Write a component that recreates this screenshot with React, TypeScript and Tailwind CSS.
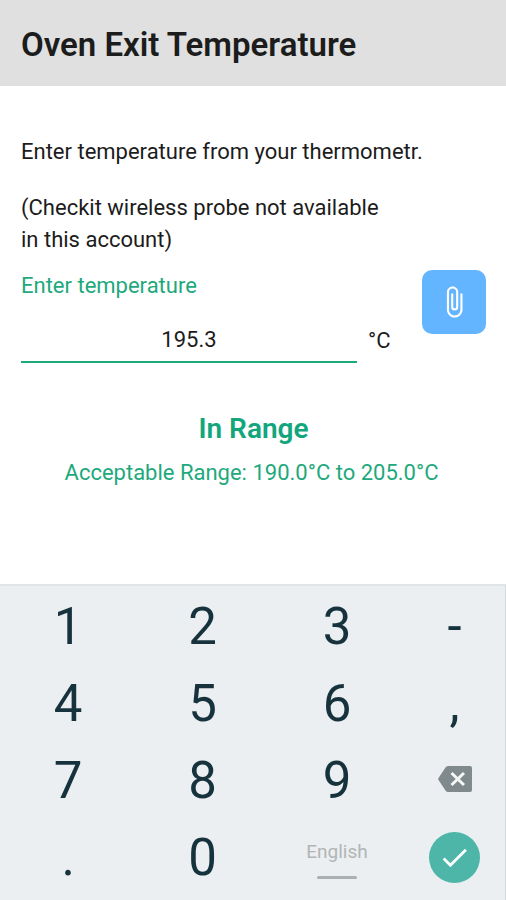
import { useState } from "react";
import { MdAttachFile, MdCheck } from "react-icons/md";

const MIN = 190;
const MAX = 205;

function BackspaceIcon() {
  return (
    <svg className="w-[34px] h-[26px] mb-1" viewBox="0 0 34 26" fill="none">
      <path d="M10 0H32Q34 0 34 2V24Q34 26 32 26H10Q8.500 26 7.500 24.500L0.500 14Q0 13 0.500 12L7.500 1.500Q8.500 0 10 0Z" fill="#80898c" />
      <path d="M13.500 7L26 19M26 7L13.500 19" stroke="#f6f8f8" strokeWidth="3" />
    </svg>
  );
}

export default function App() {
  const [value, setValue] = useState("195.3");
  const temp = parseFloat(value);
  const inRange = temp >= MIN && temp <= MAX;

  const keyClass = "flex items-center justify-center text-[51px] leading-none text-[#16323c]";

  const renderKey = (key: string) => (
    <button key={key} type="button" className={keyClass} onClick={() => setValue(value + key)}>
      {key}
    </button>
  );

  return (
    <div className="min-h-screen flex flex-col bg-white font-[Roboto,sans-serif]">
      <header className="bg-[#e0e0e0] px-[21px] pt-6 pb-5">
        <h1 className="text-[33px] leading-[42px] font-semibold text-[#1c1c1c]">Oven Exit Temperature</h1>
      </header>

      <main className="flex-1 pl-[21px] pr-5 pt-[50px] pb-12 text-[22px] leading-8 text-[#1c1c1c]">
        <p>Enter temperature from your thermometr.</p>
        <p className="mt-6 max-w-96">
          (Checkit wireless probe not available
          <br />
          in this account)
        </p>

        <div className="mt-[14px] flex items-start justify-between">
          <div className="flex-1">
            <label htmlFor="temperature" className="block text-[#1ea97c]">
              Enter temperature
            </label>
            <div className="mt-4 flex items-center">
              <input
                id="temperature"
                type="text"
                inputMode="decimal"
                value={value}
                onChange={(e) => setValue(e.target.value)}
                className="flex-1 min-w-0 h-[45px] border-b-2 border-[#1ea97c] text-center outline-none"
              />
              <span className="w-[65px] pl-[11px]">°C</span>
            </div>
          </div>
          <button
            type="button"
            aria-label="Attach file"
            className="size-16 rounded-[10px] bg-[#64b5ff] text-white flex items-center justify-center"
          >
            <MdAttachFile size={34} />
          </button>
        </div>

        <div className="mt-12 text-center text-[#1ea97c]">
          <p className="text-[28px] leading-9 font-semibold text-[#12a67c]">{inRange ? "In Range" : "Out of Range"}</p>
          <p className="mt-[10px] pr-1">
            Acceptable Range: {MIN.toFixed(1)}°C to {MAX.toFixed(1)}°C
          </p>
        </div>
      </main>

      <div className="grid grid-cols-[4fr_4fr_4fr_3fr] auto-rows-[77px] pt-[2px] pb-1 pl-px bg-[#eceff1] border-t-2 border-r border-t-[#e2e5e6] border-r-[#d5dadc]">
        {["1", "2", "3", "-", "4", "5", "6", ",", "7", "8", "9"].map(renderKey)}
        <button
          type="button"
          aria-label="Backspace"
          className={keyClass}
          onClick={() => setValue(value.slice(0, -1))}
        >
          <BackspaceIcon />
        </button>
        {[".", "0"].map(renderKey)}
        <button type="button" className="flex flex-col items-center justify-center gap-3 pt-1 text-[19px] leading-6 text-[#b1b5b6]">
          English
          <span className="w-10 h-[3px] rounded-full bg-[#abb0b1]"></span>
        </button>
        <div className="flex items-center justify-center">
          <button
            type="button"
            aria-label="Done"
            className="size-[51px] rounded-full bg-[#4db6a9] text-white flex items-center justify-center"
          >
            <MdCheck size={33} />
          </button>
        </div>
      </div>
    </div>
  );
}
